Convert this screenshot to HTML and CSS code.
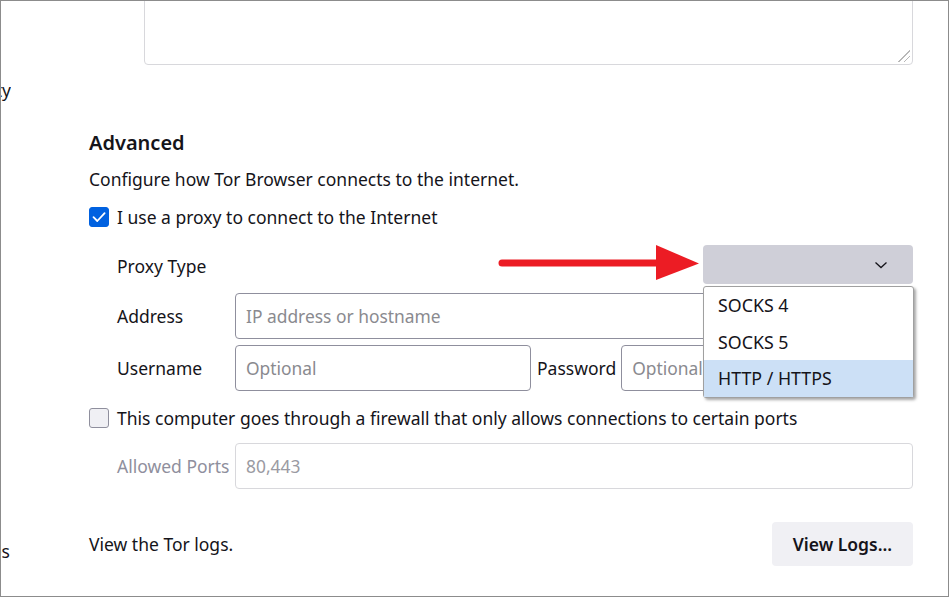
FILE: index.html
```html
<!DOCTYPE html>
<html>
<head>
<meta charset="utf-8">
<link rel="stylesheet" href="styles.css">
</head>
<body>
<div class="frame">
  <nav class="nav">
    <div class="nav-item nav-top">Privacy &amp; Security</div>
    <div class="nav-item nav-bottom">Extensions &amp; Themes</div>
  </nav>
  <main class="main">
    <div class="bridge-box">
      <div class="textarea"><span class="grip"></span></div>
    </div>

    <h2 class="heading">Advanced</h2>
    <p class="desc">Configure how Tor Browser connects to the internet.</p>

    <label class="check-row row-proxy">
      <span class="checkbox checked">
        <svg width="20" height="20" viewBox="0 0 20 20"><path d="M4.5 10.2 L8.3 14 L15.6 6.2" fill="none" stroke="#fff" stroke-width="1.8" stroke-linecap="round" stroke-linejoin="round"/></svg>
      </span>
      <span>I use a proxy to connect to the Internet</span>
    </label>

    <div class="field-row row-type">
      <span class="label">Proxy Type</span>
      <div class="select-wrap">
        <div class="select">
          <svg width="14" height="8" viewBox="0 0 14 8"><path d="M1.5 1.5 L7 6.5 L12.5 1.5" fill="none" stroke="#15141a" stroke-width="1.3"/></svg>
        </div>
        <ul class="popup">
          <li>SOCKS 4</li>
          <li>SOCKS 5</li>
          <li class="hl">HTTP / HTTPS</li>
        </ul>
        <svg class="arrow" width="210" height="40" viewBox="0 0 210 40"><line x1="6" y1="18" x2="165" y2="18" stroke="#ec1c24" stroke-width="7" stroke-linecap="round"/><polygon points="160,0 203,18.5 160,35" fill="#ec1c24"/></svg>
      </div>
    </div>

    <div class="field-row row-address">
      <span class="label">Address</span>
      <div class="input wide"><span class="ph">IP address or hostname</span></div>
    </div>

    <div class="field-row row-user">
      <span class="label">Username</span>
      <div class="input user"><span class="ph">Optional</span></div>
      <span class="label pw">Password</span>
      <div class="input pass"><span class="ph">Optional</span></div>
    </div>

    <label class="check-row row-fw">
      <span class="checkbox"></span>
      <span>This computer goes through a firewall that only allows connections to certain ports</span>
    </label>

    <div class="field-row row-ports">
      <span class="label disabled">Allowed Ports</span>
      <div class="input wide dis"><span class="val">80,443</span></div>
    </div>

    <div class="logs-row">
      <span>View the Tor logs.</span>
      <button class="btn">View Logs...</button>
    </div>
  </main>
</div>
</body>
</html>
```

FILE: styles.css
```css
* { box-sizing: border-box; }
html, body { margin: 0; padding: 0; background: #fff; }
body {
  font-family: "Noto Sans", "Open Sans", sans-serif;
  font-size: 17.5px;
  color: #15141a;
}
.frame {
  width: 949px;
  height: 597px;
  border: 1px solid #8c8c8c;
  overflow: hidden;
  display: flex;
  background: #fff;
}
.nav {
  width: 10px;
  flex: none;
  overflow: hidden;
  display: flex;
  flex-direction: column;
}
.nav-item {
  display: flex;
  justify-content: flex-end;
  white-space: nowrap;
  font-size: 17.5px;
  height: 24px;
  line-height: 24px;
}
.nav-top { margin-top: 77px; }
.nav-bottom { margin-top: 437px; margin-right: 1px; }

.main {
  flex: none;
  width: 824px;
  margin-left: 78px;
  display: flex;
  flex-direction: column;
}
.bridge-box { padding-left: 55px; }
.textarea {
  margin-top: -20px;
  height: 84px;
  border: 1px solid #d8d8dc;
  border-radius: 4px;
  position: relative;
}
.grip {
  position: absolute;
  right: 2px;
  bottom: 2px;
  width: 16px;
  height: 16px;
  background: repeating-linear-gradient(135deg, transparent 0 2px, #b8b8b8 2px 3px, transparent 3px 4px);
  clip-path: polygon(100% 0, 100% 100%, 0 100%);
}
.heading {
  margin: 64px 0 0 0;
  font-size: 20px;
  font-weight: 600;
  line-height: 28px;
}
.desc {
  margin: 10px 0 0 0;
  line-height: 24px;
}
.check-row {
  display: flex;
  align-items: center;
  gap: 8px;
  height: 24px;
  line-height: 24px;
}
.row-proxy { margin-top: 14px; }
.row-fw { margin-top: 15px; }
.checkbox {
  width: 20px;
  height: 20px;
  flex: none;
  border-radius: 3px;
  border: 1px solid #8f8f9d;
  background: #f0f0f4;
  display: flex;
}
.checkbox.checked {
  background: #0061e0;
  border-color: #0061e0;
}
.checkbox.checked svg { margin: -1px; }

.field-row {
  display: flex;
  align-items: center;
  padding-left: 28px;
}
.label {
  width: 118px;
  flex: none;
  white-space: nowrap;
  line-height: 24px;
}
.label.disabled { color: #8f8f9d; }
.label.pw { width: auto; margin: 0 5px 0 6px; }
.row-type { margin-top: 16px; justify-content: space-between; }
.row-type .label { padding-top: 2px; }
.select-wrap { position: relative; }
.select {
  width: 210px;
  height: 39px;
  background: #cfcfd8;
  border-radius: 4px;
  display: flex;
  align-items: center;
  justify-content: flex-end;
  padding-right: 25px;
}
.popup {
  position: absolute;
  top: 41px;
  left: 0;
  width: 211px;
  margin: 0;
  padding: 0;
  list-style: none;
  background: #fff;
  border: 1px solid #a0a0a0;
  border-radius: 3px;
  box-shadow: 2px 2px 3px rgba(0,0,0,0.35);
  z-index: 5;
}
.popup li {
  height: 36.7px;
  line-height: 36px;
  padding-left: 14px;
  font-size: 17.8px;
}
.popup li.hl { background: #cce0f6; }
.arrow {
  position: absolute;
  left: -207px;
  top: 0;
}

.input {
  height: 46px;
  border: 1px solid #8f8f9d;
  border-radius: 4px;
  display: flex;
  align-items: center;
  padding-left: 10px;
  font-size: 17.4px;
}
.input.wide { flex: 1; }
.input.user { width: 296px; flex: none; }
.input.pass { flex: 1; }
.input.dis { border-color: #d8d8dc; }
.ph { color: #8a8a8f; }
.val { color: #9a9aa2; }
.row-address { margin-top: 9px; }
.row-user { margin-top: 6px; }
.row-ports { margin-top: 13px; }

.logs-row {
  margin-top: 33px;
  display: flex;
  align-items: center;
  justify-content: space-between;
}
.btn {
  width: 141px;
  height: 44px;
  border: none;
  border-radius: 4px;
  background: #f0f0f4;
  font-family: inherit;
  font-size: 17.5px;
  font-weight: 600;
  color: #15141a;
}
```
